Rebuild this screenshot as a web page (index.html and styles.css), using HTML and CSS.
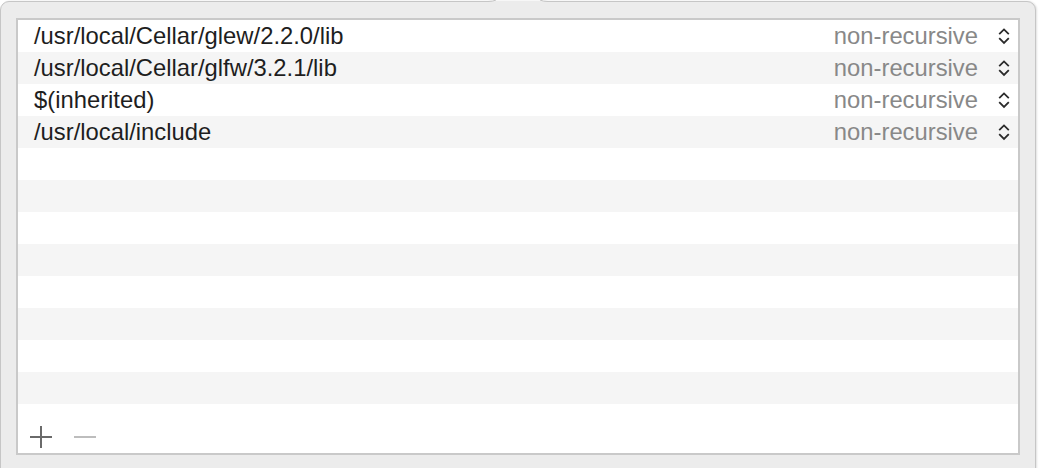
FILE: index.html
```html
<!DOCTYPE html>
<html>
<head>
<meta charset="utf-8">
<link rel="stylesheet" href="styles.css">
</head>
<body>
<div class="popover">
  <svg class="arrow" width="60" height="4" viewBox="0 0 60 4">
    <rect x="0" y="1" width="60" height="3" fill="#ececec"/>
    <path d="M0 1.5 Q5 1.5 8 0" stroke="#c4c4c4" stroke-width="1" fill="none"/>
    <path d="M52 0 Q55 1.5 60 1.5" stroke="#c4c4c4" stroke-width="1" fill="none"/>
  </svg>
  <div class="table">
    <div class="rows">
      <div class="row"><span class="path">/usr/local/Cellar/glew/2.2.0/lib</span><span class="mode">non-recursive</span><svg class="step" width="14" height="20" viewBox="0 0 14 20"><path d="M2.2 8.2 L7 3.4 L11.8 8.2 M2.2 12.2 L7 17 L11.8 12.2" stroke="#2a2a2a" stroke-width="1.8" fill="none"/></svg></div>
      <div class="row"><span class="path">/usr/local/Cellar/glfw/3.2.1/lib</span><span class="mode">non-recursive</span><svg class="step" width="14" height="20" viewBox="0 0 14 20"><path d="M2.2 8.2 L7 3.4 L11.8 8.2 M2.2 12.2 L7 17 L11.8 12.2" stroke="#2a2a2a" stroke-width="1.8" fill="none"/></svg></div>
      <div class="row"><span class="path">$(inherited)</span><span class="mode">non-recursive</span><svg class="step" width="14" height="20" viewBox="0 0 14 20"><path d="M2.2 8.2 L7 3.4 L11.8 8.2 M2.2 12.2 L7 17 L11.8 12.2" stroke="#2a2a2a" stroke-width="1.8" fill="none"/></svg></div>
      <div class="row"><span class="path">/usr/local/include</span><span class="mode">non-recursive</span><svg class="step" width="14" height="20" viewBox="0 0 14 20"><path d="M2.2 8.2 L7 3.4 L11.8 8.2 M2.2 12.2 L7 17 L11.8 12.2" stroke="#2a2a2a" stroke-width="1.8" fill="none"/></svg></div>
      <div class="row"></div>
      <div class="row"></div>
      <div class="row"></div>
      <div class="row"></div>
      <div class="row"></div>
      <div class="row"></div>
      <div class="row"></div>
      <div class="row"></div>
    </div>
    <div class="footer">
      <svg class="btn" width="24" height="24" viewBox="0 0 24 24"><path d="M12 1 V23 M1 12 H23" stroke="#6a6a6a" stroke-width="2" fill="none"/></svg>
      <svg class="btn" width="24" height="24" viewBox="0 0 24 24"><path d="M1 12 H23" stroke="#bdbdbd" stroke-width="2" fill="none"/></svg>
    </div>
  </div>
</div>
</body>
</html>
```
FILE: styles.css
```css
html, body {
  margin: 0;
  padding: 0;
  background: #ffffff;
  overflow: hidden;
}
body {
  width: 1042px;
  height: 468px;
  font-family: "Liberation Sans", Arial, sans-serif;
}
.popover {
  position: relative;
  margin-top: 1px;
  width: 1036px;
  height: 480px;
  background: #ececec;
  border: 1px solid #c6c6c6;
  border-radius: 9px;
  box-shadow: 1px 0 2px rgba(0,0,0,0.12);
  padding: 16px 0 0 15px;
  box-sizing: border-box;
}
.arrow {
  position: absolute;
  top: -2px;
  left: 487px;
}
.table {
  width: 1004px;
  height: 437px;
  border: 2px solid #c9c9c9;
  background: #ffffff;
  box-sizing: border-box;
  display: flex;
  flex-direction: column;
}
.rows {
  display: flex;
  flex-direction: column;
}
.row {
  height: 32px;
  display: flex;
  align-items: center;
  padding: 0 4px 0 16px;
  font-size: 23.8px;
  line-height: 32px;
}
.row:nth-child(even) {
  background: #f5f5f5;
}
.path {
  color: #1e1e1e;
  flex: 1;
  white-space: nowrap;
}
.mode {
  color: #888888;
  margin-right: 19px;
}
.step {
  display: block;
  margin-right: 3px;
}
.footer {
  flex: 1;
  display: flex;
  align-items: flex-end;
  gap: 20px;
  padding: 0 0 4px 11px;
}
.btn {
  display: block;
}
```
